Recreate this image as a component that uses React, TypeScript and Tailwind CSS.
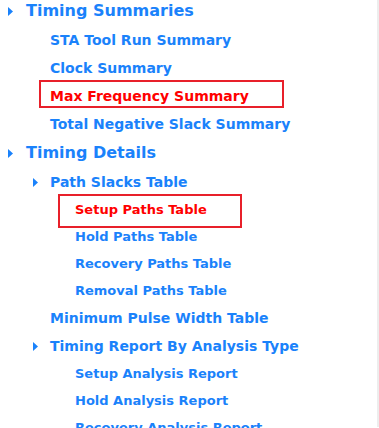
import React from 'react';

type Item = {
    label: string;
    level: 1 | 2 | 3;
    arrow?: boolean;
    highlight?: 'max' | 'setup';
};

const items: Item[] = [
    { label: 'Timing Summaries', level: 1, arrow: true },
    { label: 'STA Tool Run Summary', level: 2 },
    { label: 'Clock Summary', level: 2 },
    { label: 'Max Frequency Summary', level: 2, highlight: 'max' },
    { label: 'Total Negative Slack Summary', level: 2 },
    { label: 'Timing Details', level: 1, arrow: true },
    { label: 'Path Slacks Table', level: 2, arrow: true },
    { label: 'Setup Paths Table', level: 3, highlight: 'setup' },
    { label: 'Hold Paths Table', level: 3 },
    { label: 'Recovery Paths Table', level: 3 },
    { label: 'Removal Paths Table', level: 3 },
    { label: 'Minimum Pulse Width Table', level: 2 },
    { label: 'Timing Report By Analysis Type', level: 2, arrow: true },
    { label: 'Setup Analysis Report', level: 3 },
    { label: 'Hold Analysis Report', level: 3 },
    { label: 'Recovery Analysis Report', level: 3 },
];

const Arrow = () => (
    <svg width="5" height="9" viewBox="0 0 5 9" className="block">
        <polygon points="0,0 5,4.5 0,9" fill="#1a82fb" />
    </svg>
);

const Row: React.FC<{ item: Item }> = ({ item }) => {
    const red = !!item.highlight;
    const text = red ? 'text-[#ff0000]' : 'text-[#1a82fb]';

    let rowClasses = '';
    if (item.level === 1) rowClasses = 'h-[30px] pl-2 text-[16px]';
    else if (item.level === 2) rowClasses = item.arrow ? 'h-[28px] pl-[33px] text-[14px]' : 'h-[28px] pl-[50px] text-[14px]';
    else rowClasses = 'h-[27px] pl-[75px] text-[13px]';

    return (
        <div className={`flex items-center font-bold whitespace-nowrap ${rowClasses}`}>
            {item.arrow && (
                <span className={`flex items-center ${item.level === 1 ? 'w-[18px]' : 'w-[17px]'}`}>
                    <Arrow />
                </span>
            )}
            <span className={`relative leading-none ${text}`}>
                {item.label}
                {item.highlight === 'max' && (
                    <span className="absolute left-[-11px] top-[-9px] w-[245px] h-[28px] border-2 border-[#e8202a]"></span>
                )}
                {item.highlight === 'setup' && (
                    <span className="absolute left-[-17px] top-[-9px] w-[184px] h-[34px] border-2 border-[#e8202a]"></span>
                )}
            </span>
        </div>
    );
};

export default function App() {
    return (
        <div className="w-[379px] h-[428px] overflow-hidden bg-white flex" style={{ fontFamily: '"DejaVu Sans", Verdana, sans-serif' }}>
            <div className="flex-1 mt-[-4px]">
                {items.map((item) => (
                    <Row key={item.label} item={item} />
                ))}
            </div>
            <div className="w-[2px] h-[427px] bg-[#ededed]"></div>
        </div>
    );
}
